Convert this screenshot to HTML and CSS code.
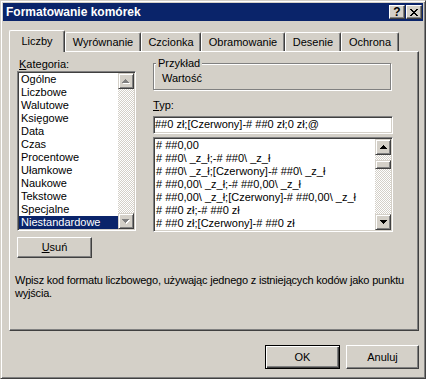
FILE: index.html
```html
<!DOCTYPE html>
<html lang="pl">
<head>
    <meta charset="UTF-8">
    <title>Formatowanie komórek</title>
    <link rel="stylesheet" href="styles.css">
</head>
<body>
<div class="window">
    <div class="titlebar">
        <span class="title">Formatowanie komórek</span>
        <div class="caption-btns">
            <span class="cbtn help">?</span>
            <span class="cbtn close">
                <svg width="8" height="7" viewBox="0 0 8 7"><path d="M0 0h2v1h1v1h2V1h1V0h2v1H7v1H6v1H5v1h1v1h1v1h1v1H6V6H5V5H3v1H2v1H0V6h1V5h1V4h1V3H2V2H1V1H0z"/></svg>
            </span>
        </div>
    </div>

    <div class="dialog">
        <div class="tabs">
            <div class="tab active">Liczby</div>
            <div class="tab t-wyr">Wyrównanie</div>
            <div class="tab t-czc">Czcionka</div>
            <div class="tab t-obr">Obramowanie</div>
            <div class="tab t-des">Desenie</div>
            <div class="tab t-och">Ochrona</div>
        </div>

        <div class="panel">
            <div class="cols">
                <div class="left">
                    <div class="label"><u>K</u>ategoria:</div>
                    <div class="listbox cat">
                        <ul class="items">
                            <li>Ogólne</li>
                            <li>Liczbowe</li>
                            <li>Walutowe</li>
                            <li>Księgowe</li>
                            <li>Data</li>
                            <li>Czas</li>
                            <li>Procentowe</li>
                            <li>Ułamkowe</li>
                            <li>Naukowe</li>
                            <li>Tekstowe</li>
                            <li>Specjalne</li>
                            <li class="selected">Niestandardowe</li>
                        </ul>
                        <div class="vscroll">
                            <span class="sbtn disabled"><svg width="8" height="5" viewBox="0 0 8 5"><path class="hi" d="M4 1h1v1h1v1h1v1h1v1H1V4h1V3h1V2h1z"/><path d="M3 0h1v1h1v1h1v1h1v1H0V3h1V2h1V1h1z"/></svg></span>
                            <span class="track"></span>
                            <span class="sbtn disabled"><svg width="8" height="5" viewBox="0 0 8 5"><path class="hi" d="M1 1h7v1H7v1H6v1H5v1H4V4H3V3H2V2H1z"/><path d="M0 0h7v1H6v1H5v1H4v1H3V3H2V2H1V1H0z"/></svg></span>
                        </div>
                    </div>
                    <button class="btn usun"><u>U</u>suń</button>
                </div>

                <div class="right">
                    <fieldset class="sample">
                        <legend>Przykład</legend>
                        <div class="sample-value">Wartość</div>
                    </fieldset>
                    <div class="label typ"><u>T</u>yp:</div>
                    <div class="textbox">##0 zł;[Czerwony]-# ##0 zł;0 zł;@</div>
                    <div class="listbox fmt">
                        <ul class="items">
                            <li># ##0,00</li>
                            <li># ##0\ _z_ł;-# ##0\ _z_ł</li>
                            <li># ##0\ _z_ł;[Czerwony]-# ##0\ _z_ł</li>
                            <li># ##0,00\ _z_ł;-# ##0,00\ _z_ł</li>
                            <li># ##0,00\ _z_ł;[Czerwony]-# ##0,00\ _z_ł</li>
                            <li># ##0 zł;-# ##0 zł</li>
                            <li># ##0 zł;[Czerwony]-# ##0 zł</li>
                        </ul>
                        <div class="vscroll">
                            <span class="sbtn"><svg width="7" height="4" viewBox="0 0 7 4"><path d="M3 0h1v1h1v1h1v1h1v1H0V3h1V2h1V1h1z"/></svg></span>
                            <span class="track">
                                <span class="thumb"></span>
                            </span>
                            <span class="sbtn"><svg width="7" height="4" viewBox="0 0 7 4"><path d="M0 0h7v1H6v1H5v1H4v1H3V3H2V2H1V1H0z"/></svg></span>
                        </div>
                    </div>
                </div>
            </div>

            <p class="hint">Wpisz kod formatu liczbowego, używając jednego z istniejących kodów jako punktu wyjścia.</p>
        </div>

        <div class="actions">
            <button class="btn default">OK</button>
            <button class="btn cancel">Anuluj</button>
        </div>
    </div>
</div>
</body>
</html>
```

FILE: styles.css
```css
* {
    box-sizing: border-box;
}
body {
    margin: 0;
    background: #d4d0c8;
    font-family: "Liberation Sans", Arial, sans-serif;
    font-size: 11px;
    line-height: 13px;
    color: #000;
}
.window {
    width: 426px;
    height: 379px;
    padding: 2px;
    background: #d4d0c8;
    border: 1px solid;
    border-color: #d4d0c8 #404040 #404040 #d4d0c8;
    box-shadow: inset 1px 1px #fff, inset -1px -1px #808080;
}

/* title bar */
.titlebar {
    height: 18px;
    background: #0a246a;
    display: flex;
    align-items: center;
    justify-content: space-between;
    padding: 0 1px 0 3px;
}
.title {
    color: #fff;
    font-weight: bold;
    font-size: 12px;
}
.caption-btns {
    display: flex;
    gap: 1px;
}
.cbtn {
    width: 16px;
    height: 14px;
    display: flex;
    align-items: center;
    justify-content: center;
    border: 1px solid;
    border-color: #fff #404040 #404040 #fff;
    box-shadow: inset -1px -1px #808080;
    background: #d4d0c8;
}
.cbtn.help {
    font-weight: bold;
    font-size: 12px;
    line-height: 12px;
}
.cbtn svg {
    fill: #000;
    shape-rendering: crispEdges;
}

/* dialog body */
.dialog {
    padding: 9px 4px 0 6px;
}
.tabs {
    display: flex;
    align-items: flex-end;
    height: 21px;
}
.tab {
    height: 19px;
    padding-top: 3px;
    text-align: center;
    border-top: 1px solid #fff;
    border-left: 1px solid #fff;
    border-right: 1px solid #404040;
    border-radius: 2px 2px 0 0;
    box-shadow: inset -1px 0 #808080;
}
.tab.active {
    width: 56px;
    height: 22px;
    margin-bottom: -1px;
    padding-top: 4px;
    position: relative;
    z-index: 1;
    background: #d4d0c8;
}
.t-wyr { width: 76px; }
.t-czc { width: 60px; }
.t-obr { width: 84px; }
.t-des { width: 56px; }
.t-och { width: 58px; }

.panel {
    height: 280px;
    padding: 6px 0 0 5px;
    border: 1px solid;
    border-color: #fff #404040 #404040 #fff;
    box-shadow: inset -1px -1px #808080;
}
.cols {
    display: grid;
    grid-template-columns: 121px 240px;
    column-gap: 17px;
    align-items: start;
}
.left {
    padding-left: 2px;
}
.label {
    padding-left: 2px;
}

/* list boxes */
.listbox {
    display: flex;
    background: #fff;
    border: 1px solid;
    border-color: #808080 #fff #fff #808080;
    box-shadow: inset 1px 1px #404040, inset -1px -1px #d4d0c8;
    padding: 1px;
}
.listbox.cat {
    width: 119px;
    height: 160px;
}
.listbox.fmt {
    width: 240px;
    height: 95px;
    margin-top: 3px;
}
.items {
    flex: 1;
    list-style: none;
    margin: 0;
    padding: 0;
    overflow: hidden;
    white-space: nowrap;
}
.items li {
    height: 13px;
    padding-left: 1px;
}
.cat .items li {
    padding-left: 2px;
}
.items li.selected {
    background: #0a246a;
    color: #fff;
}
.vscroll {
    width: 16px;
    display: flex;
    flex-direction: column;
}
.sbtn {
    height: 16px;
    display: flex;
    align-items: center;
    justify-content: center;
    background: #d4d0c8;
    border: 1px solid;
    border-color: #d4d0c8 #404040 #404040 #d4d0c8;
    box-shadow: inset 1px 1px #fff, inset -1px -1px #808080;
}
.sbtn svg {
    fill: #000;
    shape-rendering: crispEdges;
}
.sbtn.disabled svg {
    fill: #808080;
}
.sbtn.disabled svg .hi {
    fill: #fff;
}
.track {
    flex: 1;
    background: repeating-conic-gradient(#fff 0 25%, #d4d0c8 0 50%) 0 0 / 2px 2px;
}
.thumb {
    display: block;
    height: 9px;
    margin-top: 5px;
    background: #d4d0c8;
    border: 1px solid;
    border-color: #d4d0c8 #404040 #404040 #d4d0c8;
    box-shadow: inset 1px 1px #fff, inset -1px -1px #808080;
}

/* buttons */
.btn {
    font: inherit;
    color: #000;
    background: #d4d0c8;
    border: 1px solid;
    border-color: #fff #404040 #404040 #fff;
    box-shadow: inset -1px -1px #808080;
    padding: 0;
}
.usun {
    width: 75px;
    height: 21px;
    margin-top: 6px;
}

/* right column */
.sample {
    margin: -1px 0 0;
    padding: 2px 8px 4px;
    border: 1px solid #808080;
    box-shadow: 1px 1px #fff, inset 1px 1px #fff;
    width: 238px;
}
.sample legend {
    padding: 0 2px;
    margin-left: -6px;
    background: #d4d0c8;
}
.label.typ {
    margin-top: 9px;
    padding-left: 0;
}
.textbox {
    height: 18px;
    margin-top: 4px;
    padding: 1px 0 0 1px;
    background: #fff;
    white-space: nowrap;
    overflow: hidden;
    border: 1px solid;
    border-color: #808080 #fff #fff #808080;
    box-shadow: inset 1px 1px #404040, inset -1px -1px #d4d0c8;
}

.hint {
    margin: 16px 0 0;
    padding-right: 2px;
    letter-spacing: -0.2px;
}

.actions {
    display: flex;
    justify-content: flex-end;
    gap: 6px;
    margin-top: 14px;
}
.actions .btn {
    height: 24px;
}
.btn.default {
    width: 75px;
    border: 1px solid #000;
    box-shadow: inset 1px 1px #fff, inset -1px -1px #404040, inset -2px -2px #808080;
}
.btn.cancel {
    width: 73px;
}
```
